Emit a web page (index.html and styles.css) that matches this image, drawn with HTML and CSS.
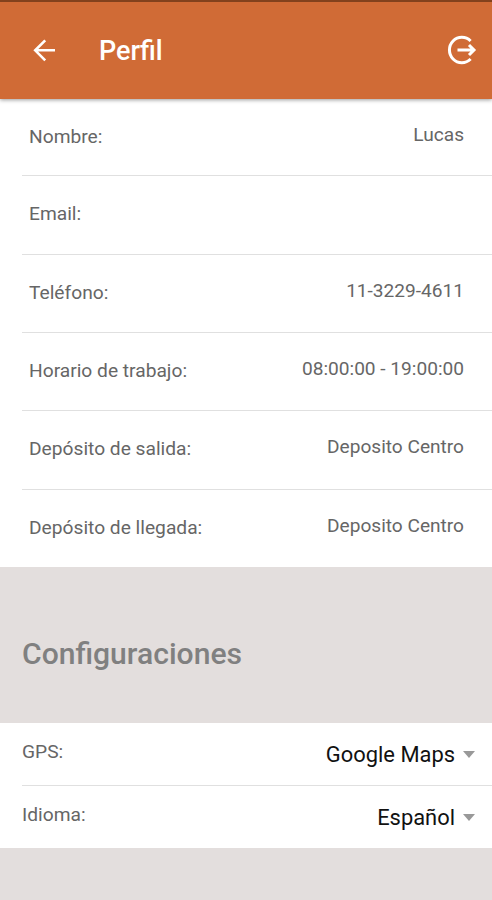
FILE: index.html
```html
<!DOCTYPE html>
<html lang="es">
<head>
  <meta charset="utf-8">
  <title>Perfil</title>
  <link rel="stylesheet" href="styles.css">
</head>
<body>
  <header class="toolbar">
    <svg class="back-icon" width="24" height="24" viewBox="0 0 24 24">
      <path d="M23 12.3H3M13.2 2.3L3.2 12.3l10 10" />
    </svg>
    <h1>Perfil</h1>
    <svg class="logout-icon" width="30" height="30" viewBox="0 0 30 30">
      <path d="M23.6 6A12.4 12.7 0 1 0 23.6 24M10.5 15H26M22 10l5 5-5 5" />
    </svg>
  </header>

  <main>
    <ul class="profile">
      <li><span class="label">Nombre:</span><span class="value">Lucas</span></li>
      <li><span class="label">Email:</span><span class="value"></span></li>
      <li><span class="label">Teléfono:</span><span class="value">11-3229-4611</span></li>
      <li><span class="label">Horario de trabajo:</span><span class="value">08:00:00 - 19:00:00</span></li>
      <li><span class="label">Depósito de salida:</span><span class="value">Deposito Centro</span></li>
      <li><span class="label">Depósito de llegada:</span><span class="value">Deposito Centro</span></li>
    </ul>

    <h2>Configuraciones</h2>

    <ul class="settings">
      <li><span class="label">GPS:</span><span class="option">Google Maps</span></li>
      <li><span class="label">Idioma:</span><span class="option">Español</span></li>
    </ul>
  </main>
</body>
</html>
```

FILE: styles.css
```css
* {
  box-sizing: border-box;
}

body {
  margin: 0;
  font-family: Roboto, "Liberation Sans", sans-serif;
  background-color: #e3dedd;
}

ul {
  list-style: none;
  margin: 0;
  padding: 0;
}

.toolbar {
  position: relative;
  display: flex;
  align-items: center;
  height: 99px;
  padding: 0 15px 1px 32px;
  background-color: #d06b36;
  border-top: 2px solid #82411d;
  box-shadow: 0 1px 4px rgba(0, 0, 0, 0.4);
}

.toolbar svg {
  fill: none;
  stroke: #fff;
  stroke-width: 2.6;
}

.toolbar .logout-icon {
  stroke-width: 3;
}

.toolbar h1 {
  flex: 1;
  margin: 2px 0 0 43px;
  color: #fff;
  font-size: 27px;
  font-weight: 500;
}

.profile {
  height: 468px;
  padding-left: 22px;
  background-color: #fff;
}

.profile li {
  display: flex;
  justify-content: space-between;
  height: 78.4px;
  padding: 26px 28px 0 7px;
}

.profile li + li {
  border-top: 1px solid #e0e0e0;
}

.profile li:first-child {
  height: 76.2px;
}

.label,
.value {
  color: #666;
  font-size: 19.2px;
  line-height: 24px;
}

.profile .value {
  margin-top: -2px;
  font-size: 19.1px;
}

h2 {
  height: 156px;
  margin: 0;
  padding-left: 22px;
  color: #808080;
  font-size: 30.1px;
  font-weight: 500;
  line-height: 174px;
}

.settings {
  padding-left: 22px;
  background-color: #fff;
}

.settings li {
  display: flex;
  justify-content: space-between;
  height: 62px;
  padding: 17px 17px 0 0;
}

.settings li + li {
  height: 63px;
  border-top: 1px solid #e0e0e0;
}

.option {
  display: flex;
  align-items: center;
  height: 28px;
  color: #111;
  font-size: 21.9px;
}

.option::after {
  content: "";
  margin-left: 8px;
  border: 6.5px solid transparent;
  border-top: 7px solid #999;
  border-bottom: none;
}
```
